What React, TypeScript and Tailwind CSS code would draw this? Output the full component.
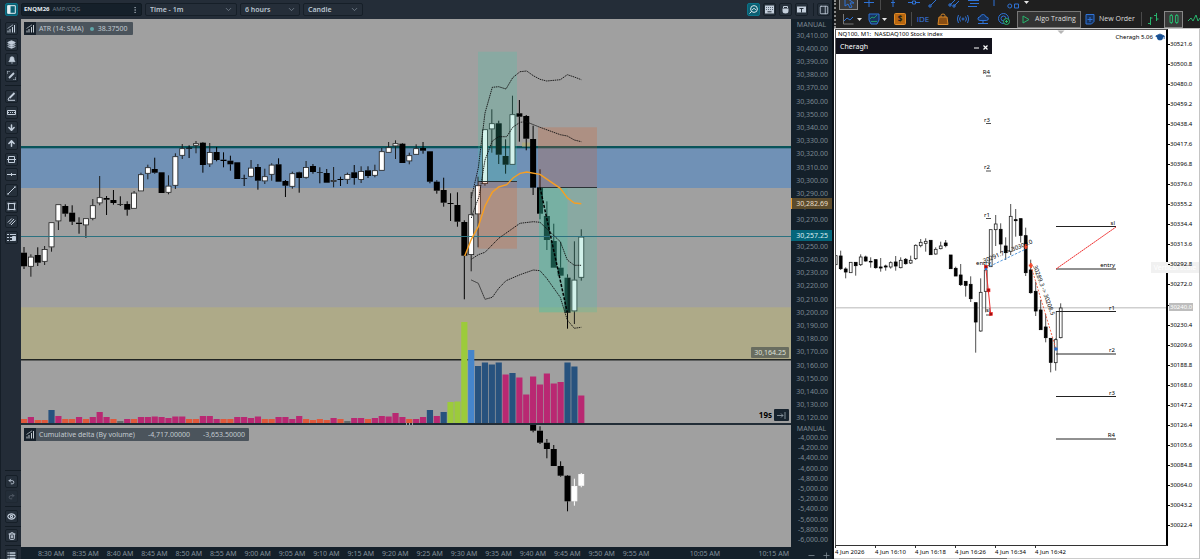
import React from "react";
import {
  ArrowDown,
  ArrowUp,
  Bell,
  ChevronDown,
  EllipsisVertical,
  Eye,
  GraduationCap,
  Layers,
  List,
  Minus,
  PanelRight,
  Plus,
  Redo2,
  Trash2,
  Undo2,
} from "lucide-react";

// [high, body top, body bottom, low, rising]
type Candle = [number, number, number, number, 0 | 1];

const candles: Candle[] = [
  [247, 252.7, 266.3, 269, 0],
  [254.3, 256.7, 266.7, 276.7, 1],
  [247.3, 255, 262.7, 266, 0],
  [246, 249, 261.7, 265, 1],
  [222.3, 222.3, 247.3, 251.7, 1],
  [204.3, 204.3, 221.3, 230, 1],
  [204.3, 206, 213.7, 216.7, 0],
  [205.3, 212.7, 221.7, 225, 0],
  [217.3, 222.7, 224, 233.7, 0],
  [218.3, 218.3, 225.3, 238, 1],
  [199, 205.3, 218.7, 220.3, 1],
  [176, 197.3, 203.3, 205.3, 1],
  [196, 198, 199.7, 215, 0],
  [190, 200, 203, 204.7, 0],
  [196.3, 204, 204.7, 206, 0],
  [201.3, 204, 209.7, 215.7, 0],
  [191, 192.7, 208.7, 208.7, 1],
  [172.7, 174.3, 191.3, 191.3, 1],
  [164.7, 167.3, 173.7, 179.3, 1],
  [157.7, 169, 172.7, 173.7, 0],
  [172.3, 172.3, 193, 193, 0],
  [175.3, 185.7, 192.7, 194.3, 1],
  [153.3, 156.3, 185.7, 189, 1],
  [144, 148.3, 155.7, 159, 1],
  [145.3, 147.7, 148.7, 158, 0],
  [141, 143.3, 145.7, 153.3, 1],
  [142, 142.7, 165, 172.7, 0],
  [143, 152, 164.3, 167, 1],
  [147, 152, 160, 161.3, 0],
  [152.3, 159.7, 161, 167.3, 0],
  [155.7, 160.7, 164.3, 170.7, 0],
  [162.3, 162.3, 179, 179, 0],
  [174.7, 178, 178.7, 186, 0],
  [160, 167.7, 176.7, 177.3, 1],
  [164, 167, 180.7, 189.7, 0],
  [168.7, 176.3, 181.3, 184, 1],
  [163.3, 164.7, 174.7, 180.7, 1],
  [158.3, 164.3, 181.7, 181.7, 0],
  [180, 181, 185.7, 197, 0],
  [171.7, 173.3, 186.7, 188.7, 1],
  [171.7, 172.3, 178, 192.7, 0],
  [161, 167, 177.7, 178.7, 1],
  [164, 166, 172, 173.7, 0],
  [167.3, 172.3, 173, 183.3, 0],
  [169, 173, 182.7, 182.7, 0],
  [167, 180, 181.7, 187.3, 1],
  [176.7, 179, 180, 186, 0],
  [172.7, 174, 179.7, 184, 1],
  [165, 172.3, 178, 184.7, 0],
  [166.3, 171, 180, 183, 1],
  [166.3, 170.3, 176, 178, 0],
  [164.7, 170.3, 175.7, 177.3, 1],
  [148, 151.3, 170.7, 170.7, 1],
  [142, 147.3, 152.7, 152.7, 1],
  [140.3, 143.3, 146.3, 159, 1],
  [143, 143.7, 163, 163, 0],
  [152.7, 155.3, 161.3, 164.3, 1],
  [144.3, 148.3, 154.7, 154.7, 1],
  [142, 148, 150.7, 153.7, 0],
  [151.3, 151.3, 181.7, 183.3, 0],
  [180.3, 181.7, 190.7, 193.7, 0],
  [177.7, 190, 202.7, 206.7, 0],
  [193.3, 203, 204, 221, 0],
  [192.3, 205, 221.7, 226.7, 0],
  [220.3, 222, 255.7, 299.3, 0],
  [192, 214.3, 255, 271.3, 1],
  [176.7, 185.3, 214.3, 247.3, 1],
  [129.3, 129.3, 184, 185.7, 1],
  [109.3, 123.3, 129.3, 152.7, 1],
  [120.7, 123.3, 154.7, 164, 0],
  [139.3, 156, 164.7, 173.7, 0],
  [95.7, 114.3, 164.7, 164.7, 1],
  [100, 113.3, 116.7, 141.7, 0],
  [115, 116, 138.7, 150.3, 0],
  [125.7, 139, 187.7, 195, 0],
  [169.3, 187.3, 213.7, 219.3, 0],
  [201.3, 216, 240, 250, 0],
  [223.7, 241, 267.7, 267.7, 0],
  [241.7, 267.7, 275.7, 275.7, 0],
  [274.3, 277.7, 312.7, 328.7, 0],
  [241.3, 279.7, 311.3, 324, 1],
  [229.3, 236.7, 277.7, 280.7, 1],
];

// cumulative delta starts at 9:40, candle 74
const deltaCandles: Candle[] = [
  [425, 425, 430.7, 432.3, 0],
  [426.3, 430.7, 442.7, 444, 0],
  [439, 442.7, 449, 458.3, 0],
  [445, 449, 466, 466, 0],
  [461.3, 466, 475.7, 476.7, 0],
  [475, 475.7, 501.3, 511.3, 0],
  [478.7, 486, 501.3, 505.7, 1],
  [473, 474, 485.7, 487.3, 1],
];

const volumeHeights = [
  4, 6, 3, 3, 13, 7, 4, 4, 6, 4, 6, 11, 6, 4, 2, 4, 4, 6, 6, 6.5, 6, 5, 6.5,
  6.5, 4, 4, 7, 7, 4, 4, 4, 6, 6, 5, 6.5, 4, 4, 6, 6, 4, 7, 4, 3, 4, 3, 5, 4,
  2, 5, 5, 4, 5, 7, 6.5, 10, 6, 4, 4, 6, 13, 7, 11, 21, 21.5, 101, 73, 57, 60.5,
  58.5, 60.5, 48.5, 50, 45.5, 28.5, 46.5, 38.5, 49.5, 39.5, 41, 60.5, 56.5,
  27.5,
];

// ten bars per entry
const volumeKinds = [
  "omoobmoomo",
  "mmmogmommm",
  "mmmmoommmo",
  "ommmmoommm",
  "moooomogmm",
  "ommmmmommb",
  "mblllsbbbb",
  "mbmmmmmmmb",
  "bm",
].join("");

const volumeColors: Record<string, string> = {
  o: "#e0583c",
  m: "#b92872",
  b: "#27527e",
  g: "#666b6b",
  l: "#9ccb3b",
  s: "#4585cb",
};

// MT5 candles, in thirds of a point below the chart's reference price
const mtCandles: Candle[] = [
  [197, 197, 224, 224, 1],
  [182, 198, 236, 240, 0],
  [232, 237, 246, 265, 0],
  [217, 217, 248, 248, 1],
  [217, 217, 227, 257, 0],
  [193, 201, 224, 228, 1],
  [197, 201, 213, 215, 0],
  [202, 214, 216, 233, 0],
  [209, 209, 233, 236, 0],
  [204, 231, 234, 245, 0],
  [224, 228, 231, 242, 0],
  [214, 218, 231, 236, 1],
  [198, 216, 228, 242, 0],
  [202, 211, 233, 235, 1],
  [204, 208, 221, 224, 0],
  [197, 211, 219, 222, 1],
  [163, 166, 206, 210, 1],
  [147, 157, 167, 172, 1],
  [145, 154, 160, 185, 1],
  [151, 151, 194, 194, 0],
  [172, 178, 192, 194, 1],
  [155, 168, 176, 178, 1],
  [150, 159, 167, 172, 0],
  [195, 195, 236, 236, 0],
  [230, 235, 258, 258, 0],
  [222, 255, 284, 288, 0],
  [274, 274, 286, 320, 0],
  [259, 283, 326, 336, 0],
  [338, 338, 396, 488, 0],
  [265, 307, 423, 425, 1],
  [225, 240, 304, 367, 1],
  [119, 119, 230, 230, 1],
  [75, 102, 119, 168, 1],
  [100, 118, 162, 190, 0],
  [142, 168, 188, 210, 0],
  [42, 79, 184, 195, 1],
  [57, 89, 92, 140, 0],
  [86, 86, 136, 158, 0],
  [113, 137, 248, 258, 0],
  [209, 240, 308, 311, 0],
  [275, 304, 363, 378, 0],
  [330, 360, 419, 419, 0],
  [372, 411, 443, 457, 0],
  [444, 445, 517, 547, 0],
  [445, 449, 518, 542, 1],
  [340, 354, 443, 445, 1],
];

// 30,260 gives way to the last price tag
const priceLabels = Array.from({ length: 30 }, (_, i) =>
  i === 15 ? "" : `30,${410 - i * 10}.00`
);
const deltaLabels = Array.from(
  { length: 11 },
  (_, i) => `-${(4000 + i * 200).toLocaleString("en-US")}.00`
);
const mtLabels = Array.from({ length: 25 }, (_, i) =>
  (30521.6 - i * 20.8).toFixed(1)
);
const timeLabels = [
  "8:30 AM", "8:35 AM", "8:40 AM", "8:45 AM", "8:50 AM", "8:55 AM",
  "9:00 AM", "9:05 AM", "9:10 AM", "9:15 AM", "9:20 AM", "9:25 AM",
  "9:30 AM", "9:35 AM", "9:40 AM", "9:45 AM", "9:50 AM", "9:55 AM",
  "", "10:05 AM", "", "10:15 AM",
];
const mtTimes = [
  "4 Jun 2026",
  "4 Jun 16:10",
  "4 Jun 16:18",
  "4 Jun 16:26",
  "4 Jun 16:34",
  "4 Jun 16:42",
];

const candleX = (i: number) => 24 + i * 6.88;

const BarsIcon = () => (
  <svg width="9" height="9" viewBox="0 0 9 9" fill="none" stroke="currentColor">
    <path d="M1 8.500V6.500M3 8.500V5M5.500 8.500V3M7.500 8.500V1" />
    <path d="M.5 4.500L6 .8" strokeWidth=".7" />
  </svg>
);

const ToolButton = ({
  label,
  children,
  active,
}: {
  label: string;
  children: React.ReactNode;
  active?: boolean;
}) => (
  <button
    aria-label={label}
    className={
      active
        ? "flex h-[13px] w-[13px] shrink-0 items-center justify-center rounded-[2px] border border-[#0c7389] bg-[#0b5f72] text-[#dfe8ee]"
        : "flex h-[13px] w-[13px] shrink-0 items-center justify-center rounded-[2px] border border-[#161f28] bg-[#26303b] text-[#c3cedb]"
    }
  >
    {children}
  </button>
);

const Glyph = ({ children }: { children: React.ReactNode }) => (
  <svg width="9" height="9" viewBox="0 0 9 9" fill="none" stroke="currentColor">
    {children}
  </svg>
);

const Dropdown = ({
  label,
  value,
  className,
}: {
  label: string;
  value: string;
  className: string;
}) => (
  <div
    className={`flex h-[13px] items-center rounded-[2px] border border-[#161f28] bg-[#252e39] pr-[3px] pl-1 ${className}`}
  >
    <select
      aria-label={label}
      className="min-w-0 flex-1 appearance-none bg-transparent text-[7px] leading-[11px] font-semibold text-[#b9c4cf] outline-none"
    >
      <option>{value}</option>
    </select>
    <ChevronDown size={9} className="text-[#7d8995]" />
  </div>
);

const TopBar = () => (
  <header className="flex h-[19px] items-center gap-[3px] bg-[#242d38] pr-[2px] pl-[5px]">
    <ToolButton label="Workspace" active>
      <svg width="9" height="9" viewBox="0 0 9 9">
        <path d="M.7.7h7.600v7.600H.7z" fill="none" stroke="#e6eef2" />
        <path d="M.5.5h3v8h-3z" fill="#e6eef2" />
      </svg>
    </ToolButton>
    <button className="flex h-[13px] w-[121px] items-center rounded-[2px] border border-[#111a22] bg-[#15202a] pl-[2px]">
      <b className="text-[6px] text-[#e1e8ee]">ENQM26</b>
      <span className="flex-1 pl-[3px] text-left text-[6px] text-[#6d7984]">
        AMP/CQG
      </span>
      <EllipsisVertical size={8} className="mr-[2px] text-[#a4afb9]" />
    </button>
    <Dropdown label="Interval" value="Time - 1m" className="w-[92px]" />
    <Dropdown label="Range" value="6 hours" className="w-[60px]" />
    <Dropdown label="Chart type" value="Candle" className="w-[60px]" />
    <div className="flex flex-1 items-center justify-end gap-[3px]">
      <ToolButton label="Quick trade" active>
        <Glyph>
          <circle cx="5" cy="4" r="3.400" />
          <path d="M3.200 5L5 3.200 6.800 5M.5 8.500L2.600 6.400" />
        </Glyph>
      </ToolButton>
      <ToolButton label="Keyboard">
        <Glyph>
          <path d="M0 .5h9v8H0z" fill="currentColor" stroke="none" />
          <path d="M1 2.500h7M1 4.500h7" strokeDasharray="1 1" stroke="#5b6774" />
          <path d="M2.500 6.800h4" stroke="#26303b" />
        </Glyph>
      </ToolButton>
      <ToolButton label="Mouse">
        <Glyph>
          <path d="M1.500 3.500h6v2.500q0 2.500-3 2.500t-3-2.500z" fill="currentColor" stroke="none" />
          <path d="M2.500 3V1.500h4V3" />
        </Glyph>
      </ToolButton>
      <ToolButton label="Text tools">
        <Glyph>
          <path d="M0 1.500h9v6H0z" fill="currentColor" stroke="none" />
          <path d="M2.500 3.500h4M4.500 3.500V7.500" stroke="#26303b" />
        </Glyph>
      </ToolButton>
      <span className="ml-[2px] h-[13px] w-px bg-[#151e27]" />
      <ToolButton label="Side panel">
        <PanelRight size={10} />
      </ToolButton>
    </div>
  </header>
);

const Sidebar = () => (
  <nav className="flex w-[21px] shrink-0 flex-col border-l border-[#151e27] bg-[#232c37] pt-[3px] pl-1">
    <div className="flex h-[60px] flex-col justify-between">
      <ToolButton label="Indicators"><BarsIcon /></ToolButton>
      <ToolButton label="Layers"><Layers size={9} fill="currentColor" /></ToolButton>
      <ToolButton label="Alerts"><Bell size={8} fill="currentColor" /></ToolButton>
      <ToolButton label="Drawing tools">
        <Glyph>
          <path d="M2 7L7 2" strokeWidth="1.800" />
          <path d="M.5 2.500v-2h2M8.500 6.500v2h-2" strokeDasharray="1 .6" />
        </Glyph>
      </ToolButton>
    </div>
    <hr className="mt-[3px] mb-1 border-[#131c24]" />
    <div className="flex h-[154px] flex-col justify-between">
      <ToolButton label="Brush">
        <Glyph>
          <path d="M2.500 6L7.500 1" strokeWidth="1.800" />
          <path d="M1 8.300h7M1 8l1-2.500" />
        </Glyph>
      </ToolButton>
      <ToolButton label="Ruler">
        <Glyph>
          <path d="M.5 2.500h8v4h-8z" />
          <path d="M1 4.500h7" strokeDasharray="1 1" />
        </Glyph>
      </ToolButton>
      <ToolButton label="Arrow down"><ArrowDown size={9} strokeWidth={4} /></ToolButton>
      <ToolButton label="Arrow up"><ArrowUp size={9} strokeWidth={4} /></ToolButton>
      <ToolButton label="Price range">
        <Glyph><path d="M1.500 1.500h6v6h-6zM0 4.500h9" /></Glyph>
      </ToolButton>
      <ToolButton label="Horizontal line">
        <Glyph><path d="M0 4.500h9M4.500 3v3" /></Glyph>
      </ToolButton>
      <ToolButton label="Trend line">
        <Glyph><path d="M1 8L8 1M0 8h2M7 1h2" /></Glyph>
      </ToolButton>
      <ToolButton label="Rectangle">
        <Glyph>
          <path d="M1.500 1.500h6v6h-6z" />
          <path d="M.5 1.500h2M6.500 1.500h2M.5 7.500h2M6.500 7.500h2" strokeWidth="1.600" />
        </Glyph>
      </ToolButton>
      <ToolButton label="Channel">
        <Glyph><path d="M.8 5.500l4-4M4 8l4.500-4.500M2.500 7L7 2" /></Glyph>
      </ToolButton>
      <ToolButton label="Position">
        <Glyph>
          <path d="M0 1.500h2M3 1.500h6M0 4.500h2M3 4.500h6M0 7.500h2M3 7.500h3" />
          <path d="M5.500 3.500h3v4h-3z" fill="currentColor" />
        </Glyph>
      </ToolButton>
    </div>
    <div className="mt-auto flex flex-col">
      <hr className="mb-1 border-[#131c24]" />
      <ToolButton label="Undo"><Undo2 size={7} strokeWidth={3} /></ToolButton>
      <span className="mt-[2px] flex opacity-30">
        <ToolButton label="Redo"><Redo2 size={7} strokeWidth={3} /></ToolButton>
      </span>
      <hr className="my-[3px] border-[#131c24]" />
      <ToolButton label="Show drawings"><Eye size={9} strokeWidth={3} /></ToolButton>
      <hr className="mt-[3px] mb-[2px] border-[#131c24]" />
      <ToolButton label="Delete"><Trash2 size={8} strokeWidth={3} /></ToolButton>
      <hr className="my-[3px] border-[#131c24]" />
      <span className="flex h-[10px] overflow-hidden">
        <ToolButton label="Objects"><List size={9} strokeWidth={4} /></ToolButton>
      </span>
    </div>
  </nav>
);

const CandleShape = ({
  x,
  c,
  upStroke = "#1c1c1c",
}: {
  x: number;
  c: Candle;
  upStroke?: string;
}) => {
  const [high, top, bottom, low, up] = c;
  return (
    <g>
      <path
        d={`M${x} ${high}V${top}M${x} ${bottom}V${low}`}
        stroke={up ? upStroke : "#000"}
        strokeWidth="1"
      />
      {up ? (
        <rect
          x={x - 2.5}
          y={top + 0.4}
          width="5"
          height={Math.max(bottom - top - 0.8, 1)}
          fill="#fff"
          stroke={upStroke}
          strokeWidth=".8"
        />
      ) : (
        <rect x={x - 3} y={top} width="6" height={bottom - top} fill="#000" />
      )}
    </g>
  );
};

const PriceChart = () => (
  <svg
    viewBox="21 19 770 404"
    preserveAspectRatio="none"
    className="h-full w-full bg-[#a0a0a0]"
  >
    <rect x="21" y="148" width="770" height="40" fill="#7091b6" />
    <rect x="21" y="146" width="770" height="2.300" fill="#09545a" />
    <rect x="21" y="307.300" width="770" height="52" fill="#aeaa88" />
    <rect x="21" y="359" width="770" height="1.500" fill="#202422" />
    <rect x="522" y="142.500" width="8" height="4" fill="#aeaa80" />
    {volumeHeights.map((h, i) => (
      <rect
        key={i}
        x={candleX(i) - 3.1}
        y={423 - h}
        width="6.200"
        height={h}
        fill={volumeColors[volumeKinds[i]]}
      />
    ))}
    {candles.map((c, i) => (
      <CandleShape key={i} x={candleX(i)} c={c} />
    ))}
    {/* risk boxes of the two trades, target in green and stop in red */}
    <g fillOpacity=".23">
      <rect x="478" y="51.700" width="39" height="129.600" fill="#3cc8aa" />
      <rect x="478" y="181.300" width="39" height="67.400" fill="#d95b23" />
      <rect x="538" y="127.300" width="59" height="60.200" fill="#d95b23" />
      <rect x="539" y="187.500" width="58" height="124.800" fill="#3cc8aa" />
      <rect x="539" y="187.500" width="28.500" height="124.800" fill="#3cc8aa" />
    </g>
    <path d="M478 181.500H517M538 187.500H597" stroke="#2a3236" />
    <path d="M21 236.500H791" stroke="#2c7280" />
    <g fill="none" stroke="#111" strokeWidth=".9" strokeDasharray="1.500 .7">
      <path d="M471.300 198L478.300 168 485 113 492.300 87.300 498.700 86.700 506 89 512.700 77.700 520 71.700 526.700 71 533.300 75.700 540 79.300 546.700 81 560.300 79.700 567.300 74.700 574.300 77 581.300 79.700" />
      <path d="M471.300 218L474.700 208 479 196.700 481.700 180 485 160 492.300 141 498.700 136.700 506.700 136.700 512.700 127.300 520 122.300 526 121.700 540 127.300 560.300 134.700 567.300 136 574.300 140 581.300 141.700" />
      <path d="M471.300 259.300L478.300 254.700 485 252.300 498.700 238.300 520 223.300 533.300 221.700 540 222.300 560.300 241.700 567.300 260 574.300 265.300 581.300 265.300" />
      <path d="M471.300 280L478.300 283.300 485 299.300 492.300 297.300 498.700 288.300 506 280.700 520 274.700 533.300 270 540 270.700 546.700 278.300 560.300 297.300 567.300 320 574.300 328.300 581.300 327.300" />
    </g>
    <path
      d="M464.700 256L471.300 239.300 478.300 226.700 485 206 492.300 192.300 498.700 187 506.700 184.700 513.300 177.700 520 173.300 526.700 172 540 174.300 560.300 188.300 567.300 197.700 574.300 203 581.300 203.700"
      fill="none"
      stroke="#f79f22"
      strokeWidth="1.400"
    />
    <path d="M540 187.300L567.300 312.700" stroke="#000" strokeWidth="1.500" strokeDasharray="3 1.500" />
  </svg>
);

const DeltaChart = () => (
  <svg
    viewBox="21 425 770 122"
    preserveAspectRatio="none"
    className="h-full w-full bg-[#a0a0a0]"
  >
    {deltaCandles.map((c, i) => (
      <CandleShape key={i} x={candleX(i + 74)} c={c} upStroke="#fff" />
    ))}
  </svg>
);

const Badge = ({ children }: { children: React.ReactNode }) => (
  <div className="absolute top-[3px] left-[3px] flex h-[13px] items-center rounded-[1px] bg-[#4b545c] text-[7px] leading-[13px] whitespace-pre text-[#c2cad0]">
    <span className="mr-[3px] flex h-[13px] w-[12px] items-center justify-center bg-[#17212b]">
      <BarsIcon />
    </span>
    {children}
  </div>
);

const AxisLabels = ({ items }: { items: string[] }) => (
  <ol className="flex min-h-0 flex-1 flex-col">
    {items.map((label, i) => (
      <li key={i} className="flex min-h-0 flex-1 items-center justify-end pr-1">
        {label}
      </li>
    ))}
  </ol>
);

const axisClass =
  "relative flex w-[41px] shrink-0 flex-col bg-[#14202a] text-[7px] leading-[8px] text-[#7b8791]";

const QuantPanel = () => (
  <section className="flex min-w-0 flex-1 flex-col border-r-2 border-[#0b1118] bg-[#14202a] font-['Noto_Sans',sans-serif]">
    <TopBar />
    <div className="flex min-h-0 flex-1">
      <Sidebar />
      <div className="flex min-w-0 flex-1 flex-col">
        <div className="flex min-h-0 flex-1">
          <div className="relative min-w-0 flex-1 border-b-2 border-[#222d37]">
            <PriceChart />
            <Badge>
              <span>ATR (14: SMA)</span>
              <i className="mr-1 ml-[6px] h-1 w-1 rounded-full bg-[#5fa5a8]" />
              <span className="pr-[5px]">38.37500</span>
            </Badge>
            <span className="absolute right-[2px] bottom-[65px] h-[11px] rounded-[1px] bg-[#696d60] px-[3px] text-[7px] leading-[11px] text-[#dde0d8]">
              30,164.25
            </span>
            <div className="absolute right-[2px] bottom-[2px] flex items-center gap-[2px]">
              <b className="text-[8px] leading-[12px] text-black">19s</b>
              <button
                aria-label="Go to last bar"
                className="flex h-[12px] w-[15px] items-center justify-center rounded-[1px] bg-[#17232e] text-[#9ba6b0]"
              >
                <Glyph><path d="M0 4.500h6M4 2.500l2 2-2 2M8 1v7" strokeWidth=".8" /></Glyph>
              </button>
            </div>
            <span className="absolute -bottom-[2px] left-1/2 flex h-[2px] w-[7px] justify-between">
              <i className="w-px bg-[#9aa4ad]" />
              <i className="w-px bg-[#9aa4ad]" />
              <i className="w-px bg-[#9aa4ad]" />
            </span>
          </div>
          <div className={axisClass}>
            <span className="flex h-[10px] items-end justify-center">MANUAL</span>
            <AxisLabels items={priceLabels} />
            <span className="absolute top-[44%] left-0 h-[11px] w-full border-l border-[#f0a02c] bg-[#5d4c2c] pr-1 text-right leading-[11px] text-[#e9dfc9]">
              30,282.69
            </span>
            <span className="absolute top-[52%] left-0 h-[11px] w-full bg-[#04667b] pr-1 text-right leading-[11px] text-[#d9ecf0]">
              30,257.25
            </span>
          </div>
        </div>
        <div className="flex h-[122px]">
          <div className="relative min-w-0 flex-1">
            <DeltaChart />
            <Badge>
              <span>Cumulative delta (By volume)</span>
              <span className="pl-[13px]">-4,717.00000</span>
              <span className="pr-1 pl-[13px]">-3,653.50000</span>
            </Badge>
          </div>
          <div className={axisClass + " pb-[2px]"}>
            <span className="flex h-[8px] items-center justify-center">MANUAL</span>
            <AxisLabels items={deltaLabels} />
          </div>
        </div>
        <div className="flex h-[12px] text-[7px] leading-[13px] text-[#84909a]">
          <ol className="flex min-w-0 flex-1 pl-[13px]">
            {timeLabels.map((t, i) => (
              <li key={i} className="flex min-w-0 flex-1 justify-center whitespace-nowrap">
                {t}
              </li>
            ))}
          </ol>
          <div className="flex w-[41px] items-center justify-end gap-[6px] pt-1 pr-px">
            <button aria-label="Zoom out"><Minus size={9} /></button>
            <button aria-label="Zoom in"><Plus size={9} /></button>
          </div>
        </div>
      </div>
    </div>
  </section>
);

const Caret = () => (
  <svg width="5" height="3" viewBox="0 0 5 3" fill="#e6e6e6">
    <path d="M0 0h5L2.500 3z" />
  </svg>
);

const MtButton = ({
  label,
  className = "w-[20px]",
  children,
}: {
  label: string;
  className?: string;
  children: React.ReactNode;
}) => (
  <button
    aria-label={label}
    className={`flex shrink-0 items-center justify-center ${className}`}
  >
    {children}
  </button>
);

const Draw = ({
  children,
  color = "#2f73d6",
  w = 12,
  h = 12,
}: {
  children: React.ReactNode;
  color?: string;
  w?: number;
  h?: number;
}) => (
  <svg width={w} height={h} viewBox={`0 0 ${w} ${h}`} fill="none" stroke={color}>
    {children}
  </svg>
);

const MtToolbar = () => (
  <header className="h-[28px] overflow-hidden border-l-2 border-dotted border-[#8a8a8a] bg-[#1f1f1f] font-['Open_Sans',sans-serif]">
    <div className="flex h-[10px] items-end overflow-hidden pl-[3px]">
      <MtButton label="Cursor" className="h-[16px] w-[19px] border border-[#8c8c8c] bg-[#3a3a3a]">
        <Draw><path d="M2 1v9l3-2 2 4 2-1-2-4h4z" /></Draw>
      </MtButton>
      <MtButton label="Crosshair" className="w-[22px]"><Draw><path d="M6 0v9M1 4.500h10" /></Draw></MtButton>
      <span className="h-[10px] w-px bg-[#4a4a4a]" />
      <MtButton label="Vertical line" className="w-[23px]"><Draw><path d="M6 0v9M4 4.500h4" /></Draw></MtButton>
      <MtButton label="Horizontal line"><Draw><path d="M0 4.500h4M8 4.500h4M4.500 3h3v3h-3z" /></Draw></MtButton>
      <MtButton label="Trend line"><Draw><path d="M3 7l7-7M1 7h2v2H1z" /></Draw></MtButton>
      <MtButton label="Channel"><Draw><path d="M2 7l6-6M6 8l5-5M1 6h2v2H1zM5 7h2v2H5z" /></Draw></MtButton>
      <MtButton label="Fibonacci"><Draw><path d="M0 2.500h11M2 5.500h9M0 8.500h9" /></Draw></MtButton>
      <MtButton label="Text"><Draw><path d="M6 0v8" /></Draw></MtButton>
      <MtButton label="Shapes" className="w-[18px]">
        <Draw><circle cx="2.800" cy="8" r="2" /><path d="M7.500 6h4v4h-4z" /></Draw>
      </MtButton>
      <span className="ml-[2px] pb-[6px]"><Caret /></span>
    </div>
    <div className="flex h-[18px] items-center pl-[3px]">
      <MtButton label="Chart type" className="w-[18px]">
        <Draw><path d="M1.500 1v10h10" stroke="#777" /><path d="M2 8l3-3 3 2 3-3" /></Draw>
      </MtButton>
      <Caret />
      <MtButton label="Templates" className="ml-1 w-[16px]">
        <Draw>
          <path d="M1 1h10v6L9 11H3L1 7z" fill="#17335e" />
          <path d="M2 6l2-2 2 1 3-3M3 8.500h6" stroke="#25b06d" strokeWidth=".8" />
        </Draw>
      </MtButton>
      <Caret />
      <MtButton label="Depth of market" className="ml-[3px] w-[20px]">
        <svg width="12" height="12" viewBox="0 0 12 12">
          <rect x=".5" y=".5" width="11" height="11" rx="1" fill="#b8670f" stroke="#e08a28" />
          <text x="6" y="9" fontSize="8" fontWeight="700" textAnchor="middle" fill="#1f1f1f">$</text>
        </svg>
      </MtButton>
      <span className="mx-px h-[14px] w-px bg-[#4a4a4a]" />
      <button className="w-[20px] text-center text-[8px] leading-[12px] text-[#3a80e6]">
        IDE
      </button>
      <MtButton label="Market">
        <Draw color="#d68628">
          <path d="M4 4V2.500q0-1.500 2-1.500t2 1.500V4" />
          <path d="M2 4h8l1 7.500H1z" fill="#8a4e12" />
        </Draw>
      </MtButton>
      <MtButton label="Signals">
        <Draw>
          <circle cx="6" cy="6" r="1" />
          <path d="M3.500 3.500q-2 2.500 0 5M1.500 2q-2.500 4 0 8M8.500 3.500q2 2.500 0 5M10.500 2q2.500 4 0 8" />
        </Draw>
      </MtButton>
      <MtButton label="VPS">
        <Draw>
          <path d="M3 7.500q-2.500 0-2-2.500 1-1.500 2-1Q4 1 6.500 1.500 8.500 2 9 4q2.500 0 2.300 2-.3 1.500-2 1.500z" fill="#17335e" />
          <path d="M6 7v3M1 10.500h10" />
        </Draw>
      </MtButton>
      <MtButton label="Network" className="w-[22px]">
        <Draw>
          <circle cx="5.500" cy="5.500" r="5" />
          <circle cx="5.500" cy="5.500" r="2.500" />
          <circle cx="8.500" cy="8.500" r="3" fill="#1f1f1f" stroke="#27b36c" />
          <path d="M8.500 7v3M7 8.500h3" stroke="#27b36c" />
        </Draw>
      </MtButton>
      <button className="ml-[2px] flex h-[17px] w-[64px] shrink-0 items-center gap-[5px] border border-[#777] bg-[#333] pl-1 text-[7px] whitespace-nowrap text-[#dcdcdc]">
        <Draw w={8} h={9} color="#27b36c"><path d="M1 1l6 3.500-6 3.500z" /></Draw>
        Algo Trading
      </button>
      <button className="ml-1 flex w-[56px] shrink-0 items-center gap-1 text-[7px] whitespace-nowrap text-[#dcdcdc]">
        <Draw w={10} h={11}>
          <path d="M1 .5h8v7L6.500 10H1z" fill="#17335e" />
          <path d="M5 3v5M2.500 5.500h5" />
        </Draw>
        New Order
      </button>
      <span className="h-[14px] w-px bg-[#4a4a4a]" />
      <MtButton label="Bars" className="w-[22px]">
        <Draw color="#27b36c"><path d="M3.500 4v8M1 10.500h2.500M3.500 5h2M9.500 0v8M7 2.500h2.500M9.500 6h2" /></Draw>
      </MtButton>
      <MtButton label="Candlesticks" className="h-[17px] w-[19px] border border-[#888] bg-[#3a3a3a]">
        <Draw color="#27b36c"><path d="M2 2.500h2.500v7H2zM7.500 2.500H10v7H7.500zM3.300 1v1.500M3.300 9.500V11M8.800 1v1.500M8.800 9.500V11" /></Draw>
      </MtButton>
      <MtButton label="Line" className="ml-[5px] w-[12px]">
        <Draw color="#27b36c"><path d="M0 8l3-3 2 3 3-6 2 6 2-3" /></Draw>
      </MtButton>
    </div>
  </header>
);

const mtX = (i: number) => 835.7 + i * 5;
const mtY = (v: number) => 190 + v / 3;

const levels: [string, number][] = [
  ["sl", 226.5],
  ["entry", 269],
  ["r1", 311.5],
  ["r2", 354],
  ["r3", 396.5],
  ["R4", 439],
];
const oldLevels: [string, number][] = [
  ["R4", 76],
  ["r3", 123.5],
  ["r2", 171],
  ["r1", 218.5],
];

const MtChart = () => (
  <svg
    viewBox="836 30 330 515"
    preserveAspectRatio="xMinYMin meet"
    className="h-full w-full font-['Noto_Sans',sans-serif] text-[6px]"
  >
    <path d="M836 307.800H1166" stroke="#cfcfcf" strokeWidth="1.500" />
    <path d="M1057.500 30.500h7l-3.500 3.500z" fill="#b5b5b5" />
    {mtCandles.map(([h, t, b, l, up], i) => (
      <g key={i}>
        <path
          d={`M${mtX(i)} ${mtY(h)}V${mtY(t)}M${mtX(i)} ${mtY(b)}V${mtY(l)}`}
          stroke="#222"
          strokeWidth=".8"
        />
        <rect
          x={mtX(i) - 1.4}
          y={mtY(t)}
          width="2.800"
          height={Math.max(mtY(b) - mtY(t), 0.6)}
          fill={up ? "#fff" : "#000"}
          stroke={up ? "#222" : "#000"}
          strokeWidth=".8"
        />
      </g>
    ))}
    {levels.map(([name, y]) => (
      <g key={name}>
        <path d={`M1056 ${y}H1116`} stroke="#222" />
        <text x="1115" y={y - 2} textAnchor="end">{name}</text>
      </g>
    ))}
    {oldLevels.map(([name, y]) => (
      <g key={name}>
        <path d={`M986 ${y}H991`} stroke="#222" strokeWidth=".8" />
        <text x="990" y={y - 2} textAnchor="end">{name}</text>
      </g>
    ))}
    <path d="M1056.300 311V340" stroke="#222" strokeWidth=".8" />
    <path d="M1056 269L1116 227" stroke="#f03030" strokeDasharray="2 .4" />
    <text x="976" y="265">entry</text>
    <text x="986" y="312">sl</text>
    <path d="M986 315H991" stroke="#222" strokeWidth=".8" />
    <path d="M985.700 267L988.300 290 990.700 314" fill="none" stroke="#f03030" />
    <path d="M986 268L1026 249" stroke="#3d8ad8" strokeWidth=".9" strokeDasharray="2.500 1.500" />
    <path d="M1031 266L1056 349" stroke="#f0563a" strokeWidth=".9" strokeDasharray="2 1.500" />
    <g fill="#a01010" stroke="#f02020" strokeWidth=".6">
      <rect x="984.300" y="265.300" width="3" height="3" />
      <rect x="987" y="288.800" width="3" height="3" />
      <rect x="989.300" y="312.500" width="3" height="3" />
    </g>
    <path d="M1025.800 244v5M1023.800 246.500h4M1030.800 263v5M1028.800 265.500h4" stroke="#f0482c" strokeWidth="1.800" />
    <circle cx="986" cy="269" r="1.200" fill="#2a6fd0" />
    <circle cx="1056" cy="349" r="1.800" fill="#2a6fd0" />
    <text transform="translate(984 263) rotate(-22)">30291.7 -&gt; 30309.0</text>
    <text transform="translate(1033 266) rotate(70)">30289.3 -&gt; 30208.5</text>
  </svg>
);

const MtPanel = () => (
  <section className="flex w-[366px] shrink-0 flex-col bg-white">
    <MtToolbar />
    <div className="flex min-h-0 flex-1 flex-col border-t border-r border-[#c4c4c4] font-['Noto_Sans',sans-serif] text-[6px] leading-[7px] text-black">
      <div className="flex min-h-0 flex-1">
        <div className="relative ml-px min-w-0 flex-1 border-t border-r-2 border-b border-l border-t-[#555] border-r-black border-b-[#333] border-l-[#555]">
          <MtChart />
          <div className="absolute top-0 left-0 w-[156px]">
            <h2 className="h-[8px] pl-[2px] leading-[8px] whitespace-pre">
              NQ100, M1:  NASDAQ100 Stock index
            </h2>
            <div className="flex h-[16px] items-center bg-[#12121c] pl-1 text-[7px] text-white">
              <span className="flex-1">Cheragh</span>
              <button aria-label="Minimize" className="mr-1 pt-[3px]">
                <svg width="5" height="2"><path d="M0 1h5" stroke="#fff" /></svg>
              </button>
              <button aria-label="Close" className="mr-1 pt-[3px]">
                <svg width="5" height="5"><path d="M.5.5l4 4M4.500.5l-4 4" stroke="#fff" strokeWidth="1.200" /></svg>
              </button>
            </div>
          </div>
          <div className="absolute top-[2px] right-px flex items-center gap-[2px]">
            Cheragh 5.06
            <GraduationCap size={10} className="fill-[#174f93] text-[#174f93]" />
          </div>
        </div>
        <div className="relative w-[31px]">
          <span className="absolute top-[45%] right-0 w-[48px] bg-[#f1f1f1] text-center text-[7px] leading-[11px] whitespace-nowrap text-white">
            Vertical scale
          </span>
          <ol className="relative flex h-full flex-col pt-[5px] pb-[10px]">
            {mtLabels.map((label) => (
              <li key={label} className="flex min-h-0 flex-1 items-center">
                <span className="h-px w-[2px] bg-black" />
                {label}
              </li>
            ))}
          </ol>
          <span className="absolute top-[53%] left-px bg-[#bdbdbd] px-px leading-[8px] text-white">
            30240.0
          </span>
        </div>
      </div>
      <ol className="flex h-[12px] pl-px">
        {mtTimes.map((t) => (
          <li key={t} className="flex w-[40px] flex-col whitespace-nowrap">
            <span className="h-[2px] w-px bg-[#333]" />
            <span className="leading-[8px]">{t}</span>
          </li>
        ))}
      </ol>
      <div className="h-[1px] bg-[#cccccc] pl-[125px]">
        <div className="h-[1px] w-[48px] bg-[#6f6f6f]" />
      </div>
    </div>
  </section>
);

export default function App() {
  return (
    <main className="flex h-screen min-h-[480px] w-full overflow-hidden bg-[#14202a]">
      <QuantPanel />
      <MtPanel />
    </main>
  );
}
